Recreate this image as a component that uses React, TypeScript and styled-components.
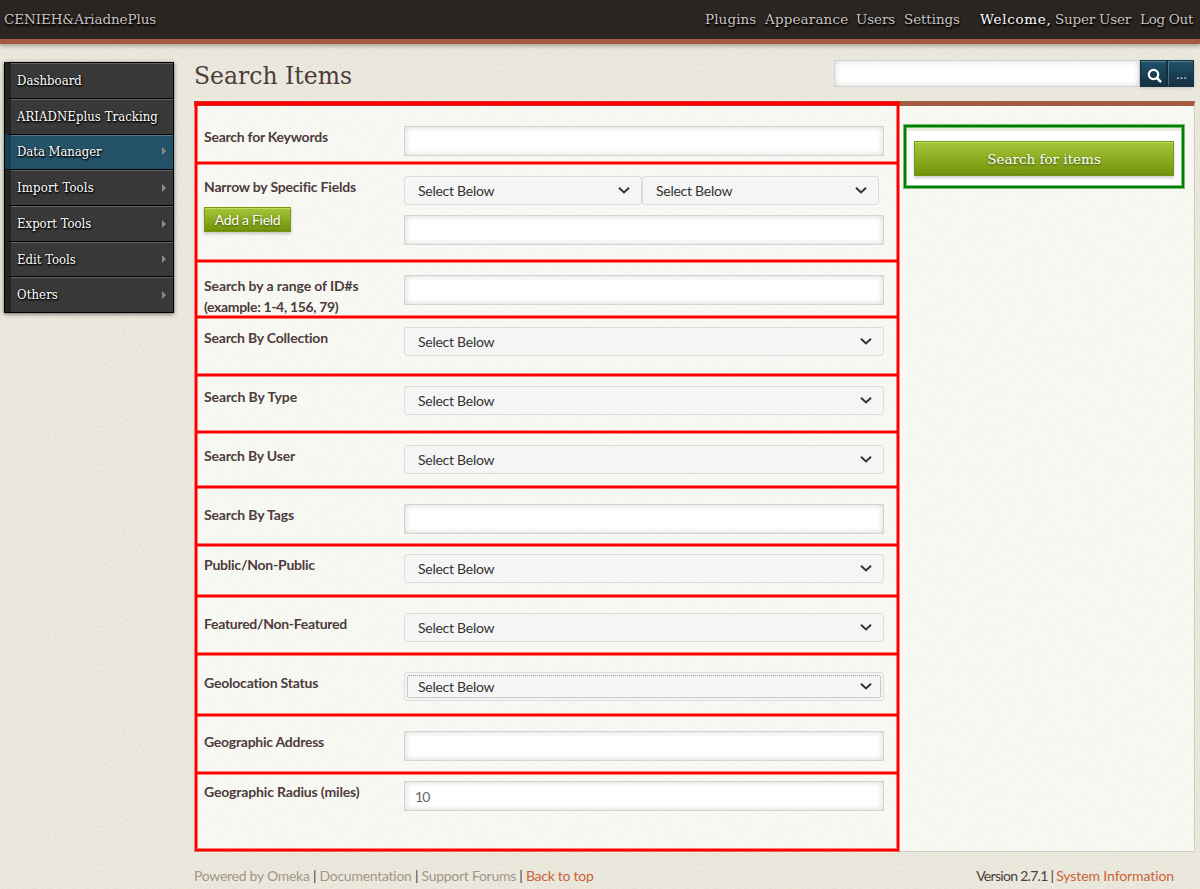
import React from "react";
import styled, { createGlobalStyle, css } from "styled-components";

const slab = `"DejaVu Serif", serif`;
const slabNarrow = `"DejaVu Serif Condensed", "DejaVu Serif", serif`;
const sans = `Lato, "Open Sans", sans-serif`;

const grain = (tone: string, alpha: number, offset: number, freq: number) =>
  `url("data:image/svg+xml,${encodeURIComponent(
    `<svg xmlns='http://www.w3.org/2000/svg' width='200' height='200'><filter id='n' x='0' y='0' width='100%' height='100%'><feTurbulence type='fractalNoise' baseFrequency='${freq}' numOctaves='3' stitchTiles='stitch'/><feColorMatrix values='0 0 0 0 ${tone} 0 0 0 0 ${tone} 0 0 0 0 ${tone} ${alpha} 0 0 0 ${offset}'/></filter><rect width='200' height='200' filter='url(#n)'/></svg>`
  )}")`;

const Global = createGlobalStyle`
  *, *::before, *::after { box-sizing: border-box; }
  html, body { margin: 0; padding: 0; }
  body {
    background: ${grain("0.4", 0.3, -0.1, 0.5)} #edebde;
    color: #4d3c3c;
    font-family: ${sans};
    font-size: 14px;
    overflow: hidden;
  }
  button, input { font: inherit; }
`;

const Page = styled.div`
  display: flex;
  flex-direction: column;
  width: 1200px;
  height: 889px;
`;

const Header = styled.header`
  display: flex;
  height: 44px;
  flex: none;
  padding: 0 6px 0 4px;
  background: #2b2522;
  border-bottom: 5px solid #a25a40;
  box-shadow: 0 2px 4px rgba(0, 0, 0, 0.3);
  font-family: ${slab};
  font-size: 13.5px;
  line-height: 38px;
  color: #c6c4c1;
  text-shadow: 0 1px 2px #000, 1px 2px 2px #000;
  white-space: nowrap;
`;

const Slot = styled.span<{ $w: number; $ls?: number }>`
  flex: none;
  width: ${(p) => p.$w}px;
  letter-spacing: ${(p) => p.$ls ?? 0}px;
  white-space: nowrap;
`;

const Nav = styled.nav`
  display: flex;
  margin-left: auto;
`;

const White = styled.span`
  color: #fff;
`;

const Body = styled.div`
  display: flex;
  flex: 1;
  padding: 18px 5px 0 4px;
`;

const Menu = styled.ul`
  flex: none;
  width: 170px;
  height: 251px;
  margin: 0 20px 0 0;
  padding: 0 0 1px;
  list-style: none;
  background: #000;
  border: 0 solid #000;
  border-width: 0 1px;
  box-shadow: 0 1px 4px rgba(0, 0, 0, 0.55);
  font-family: ${slabNarrow};
  font-size: 13px;
  color: #fff;
`;

const MenuItem = styled.li<{ $h: number; $active?: boolean }>`
  display: flex;
  align-items: center;
  justify-content: space-between;
  height: ${(p) => p.$h}px;
  padding: 0 6px ${(p) => (p.$active ? 2 : 0)}px 6px;
  border-top: 1px solid #000;
  border-left: 6px solid ${(p) => (p.$active ? "#1b3f50" : "#252525")};
  background: repeating-conic-gradient(rgba(0, 0, 0, 0.09) 0 25%, transparent 0 50%) 0 0 / 4px 4px,
    ${(p) => (p.$active ? "#25566e" : "#3b3b3b")};
  box-shadow: inset 0 1px 0 rgba(255, 255, 255, 0.22);
  text-shadow: 0 1px 2px #000, 1px 1px 2px #000;
`;

const Arrow = styled.i`
  width: 0;
  height: 0;
  margin-right: 1px;
  border: 4px solid transparent;
  border-left-color: #8a8a8a;
  border-right-width: 0;
`;

const Main = styled.main`
  display: flex;
  flex-direction: column;
  width: 1001px;
`;

const TitleBar = styled.div`
  display: flex;
  justify-content: space-between;
  height: 41px;
  margin-top: -2px;
  padding-right: 1px;
`;

const Title = styled.h1`
  margin: 0;
  font: 400 23.5px/32px ${slab};
`;

const SiteSearch = styled.div`
  display: flex;
  width: 360px;
  height: 27px;
`;

const field = css`
  border: 1px solid #d4d4d4;
  background: #fff;
  box-shadow: inset 0 0 6px rgba(0, 0, 0, 0.17);
  outline: 0;
  border-radius: 0;
`;

const SiteInput = styled.input`
  ${field}
  flex: 1;
  min-width: 0;
`;

const BlueButton = styled.button`
  display: flex;
  align-items: center;
  justify-content: center;
  width: 27px;
  padding: 3px 0 0 2px;
  border: 1px solid #153243;
  background: linear-gradient(#215269, #152f40);
  box-shadow: inset 0 1px 0 rgba(255, 255, 255, 0.25), 0 1px 3px rgba(0, 0, 0, 0.15);
  color: #c3cdd2;
  line-height: 1;
  & + & {
    padding-top: 0;
    box-shadow: inset 1px 1px 0 rgba(255, 255, 255, 0.25), 0 1px 3px rgba(0, 0, 0, 0.15);
  }
`;

const Panel = styled.section`
  display: flex;
  height: 751px;
  border: 1px solid #d0cec2;
  border-top: 5px solid #a25a40;
  border-left: 0;
  background: ${grain("0.55", 0.15, -0.05, 0.2)} #f9f9f4;
`;

const halfRed = "rgba(255, 0, 0, 0.5)";

const Form = styled.form`
  width: 704px;
  height: 749px;
  margin: -4px 0 0 1px;
  border: solid #f00;
  border-width: 3px 2px 2px;
  box-shadow: 0 0 0 1px ${halfRed}, inset 0 0 0 1px ${halfRed};
`;

const Row = styled.div<{ $h: number; $pt: number }>`
  display: flex;
  height: ${(p) => p.$h}px;
  padding: ${(p) => p.$pt}px 0 0 7px;
  & + & {
    border-top: 2px solid #f00;
    box-shadow: 0 -1px 0 ${halfRed}, inset 0 1px 0 ${halfRed};
  }
`;

const LabelCol = styled.div`
  flex: none;
  width: 200px;
`;

const Label = styled.label<{ $ls: number }>`
  display: block;
  font-size: 14px;
  font-weight: 700;
  line-height: 21px;
  letter-spacing: ${(p) => p.$ls}px;
  white-space: nowrap;
`;

const Fields = styled.div`
  display: flex;
  flex-wrap: wrap;
  align-content: flex-start;
  row-gap: 10px;
  width: 480px;
`;

const TextInput = styled.input`
  ${field}
  width: 480px;
  height: 30px;
  padding: 1px 10px 1px;
  color: #666;
  letter-spacing: -0.9px;
`;

const Select = styled.div<{ $w: number; $focus?: boolean }>`
  position: relative;
  display: flex;
  align-items: center;
  justify-content: space-between;
  width: ${(p) => p.$w}px;
  height: 29px;
  padding: 0 11px 0 13px;
  border: 1px solid #dcdcdc;
  border-radius: 3px;
  background: #f5f5f5;
  color: #333;
  line-height: 29px;
  letter-spacing: -0.26px;
  ${(p) =>
    p.$focus &&
    css`
      &::after {
        content: "";
        position: absolute;
        inset: 2px;
        border: 1px dotted #999;
        border-radius: 2px;
      }
    `}
`;

const green = css`
  border: 1px solid #749a12;
  background: linear-gradient(#a5c63a, #73920a);
  box-shadow: inset 0 1px 0 #c2dc5e, inset 0 -1px 0 #6d8715, 0 2px 3px rgba(0, 0, 0, 0.2);
  color: #fff;
  text-shadow: 0 1px 2px rgba(50, 70, 0, 0.9);
  padding: 0;
  white-space: nowrap;
`;

const AddButton = styled.button`
  ${green}
  display: block;
  width: 87px;
  height: 25px;
  margin-top: 10px;
  letter-spacing: -0.3px;
`;

const SaveBox = styled.aside`
  width: 280px;
  height: 63px;
  margin: 19px 0 0 5px;
  padding: 14px 8px;
  border: 2px solid #008000;
  box-shadow: 0 0 0 1px rgba(0, 128, 0, 0.5), inset 0 0 0 1px rgba(0, 128, 0, 0.5);
  background: linear-gradient(#eceadf 4px, #fff 4px);
`;

const SaveButton = styled.button`
  ${green}
  display: block;
  width: 260px;
  height: 35px;
  font-family: ${slab};
  font-size: 13.5px;
`;

const Footer = styled.footer`
  display: flex;
  justify-content: space-between;
  padding: 14px 21px 0 0;
  line-height: 20px;
  font-size: 14px;
  letter-spacing: -0.27px;
  white-space: nowrap;
`;

const Version = styled.span`
  letter-spacing: -0.7px;
`;

const Muted = styled.span`
  color: #a49589;
`;

const Link = styled.span<{ $ls?: number }>`
  color: #cb6238;
  letter-spacing: ${(p) => p.$ls ?? -0.27}px;
`;

const Chevron = () => (
  <svg width="12" height="8" viewBox="0 0 12 8" fill="none" stroke="#333" strokeWidth="2">
    <path d="M1 0.8 6 5.4 11 0.8" />
  </svg>
);

const SearchIcon = () => (
  <svg width="15" height="15" viewBox="0 0 15 15" fill="none" stroke="#fff">
    <circle cx="6.5" cy="6.5" r="4.7" strokeWidth="2.2" />
    <path d="m10 10 3.3 3.3" strokeWidth="2.6" strokeLinecap="round" />
  </svg>
);

type MenuEntry = { text: string; h: number; ls: number; arrow?: boolean; active?: boolean };
const menu: MenuEntry[] = [
  { text: "Dashboard", h: 36, ls: 0.05 },
  { text: "ARIADNEplus Tracking", h: 36, ls: 0.06 },
  { text: "Data Manager", h: 35, ls: -0.05, arrow: true, active: true },
  { text: "Import Tools", h: 36, ls: 0.17, arrow: true },
  { text: "Export Tools", h: 36, ls: 0, arrow: true },
  { text: "Edit Tools", h: 35, ls: 0, arrow: true },
  { text: "Others", h: 36, ls: 0.1, arrow: true },
];

const Picker = ({ w = 480, focus = false }: { w?: number; focus?: boolean }) => (
  <Select $w={w} $focus={focus}>
    <span>Select Below</span>
    <Chevron />
  </Select>
);

type RowEntry = { label: string; ls: number; h: number; pt: number; kind: "input" | "select" | "focus"; value?: string };
const rows: RowEntry[] = [
  { label: "Search By Collection", ls: -0.2, h: 58, pt: 9, kind: "select" },
  { label: "Search By Type", ls: -0.1, h: 57, pt: 10, kind: "select" },
  { label: "Search By User", ls: -0.2, h: 55, pt: 12, kind: "select" },
  { label: "Search By Tags", ls: -0.14, h: 58, pt: 16, kind: "input" },
  { label: "Public/Non-Public", ls: -0.23, h: 51, pt: 8, kind: "select" },
  { label: "Featured/Non-Featured", ls: -0.29, h: 58, pt: 16, kind: "select" },
  { label: "Geolocation Status", ls: -0.2, h: 61, pt: 17, kind: "focus" },
  { label: "Geographic Address", ls: -0.25, h: 58, pt: 15, kind: "input" },
  { label: "Geographic Radius (miles)", ls: -0.16, h: 77, pt: 7, kind: "input", value: "10" },
];

export default function App() {
  return (
    <Page>
      <Global />
      <Header>
        <Slot $w={200} $ls={-0.1}>CENIEH&amp;AriadnePlus</Slot>
        <Nav>
          <Slot $w={60} $ls={0.1}>Plugins</Slot>
          <Slot $w={91} $ls={0.15}>Appearance</Slot>
          <Slot $w={48} $ls={-0.1}>Users</Slot>
          <Slot $w={76} $ls={-0.1}>Settings</Slot>
          <Slot $w={75} $ls={0.7}><White>Welcome,</White></Slot>
          <Slot $w={85} $ls={-0.2}>Super User</Slot>
          <Slot $w={54} $ls={-0.3}>Log Out</Slot>
        </Nav>
      </Header>
      <Body>
        <Menu>
          {menu.map((m) => (
            <MenuItem key={m.text} $h={m.h} $active={m.active}>
              <Slot $w={142} $ls={m.ls}>{m.text}</Slot>
              {m.arrow && <Arrow />}
            </MenuItem>
          ))}
        </Menu>
        <Main>
          <TitleBar>
            <Title>Search Items</Title>
            <SiteSearch>
              <SiteInput />
              <BlueButton type="button"><SearchIcon /></BlueButton>
              <BlueButton type="button">…</BlueButton>
            </SiteSearch>
          </TitleBar>
          <Panel>
            <Form>
              <Row $h={57} $pt={21}>
                <LabelCol><Label $ls={-0.25}>Search for Keywords</Label></LabelCol>
                <Fields><TextInput /></Fields>
              </Row>
              <Row $h={98} $pt={12}>
                <LabelCol>
                  <Label $ls={-0.2}>Narrow by Specific Fields</Label>
                  <AddButton type="button">Add a Field</AddButton>
                </LabelCol>
                <Fields>
                  <Picker w={238} />
                  <Picker w={237} />
                  <TextInput />
                </Fields>
              </Row>
              <Row $h={56} $pt={13}>
                <LabelCol>
                  <Label $ls={-0.11}>Search by a range of ID#s</Label>
                  <Label $ls={-0.34}>(example: 1-4, 156, 79)</Label>
                </LabelCol>
                <Fields><TextInput /></Fields>
              </Row>
              {rows.map((r) => (
                <Row key={r.label} $h={r.h} $pt={r.pt}>
                  <LabelCol><Label $ls={r.ls}>{r.label}</Label></LabelCol>
                  <Fields>
                    {r.kind === "input" ? <TextInput defaultValue={r.value} /> : <Picker focus={r.kind === "focus"} />}
                  </Fields>
                </Row>
              ))}
            </Form>
            <SaveBox>
              <SaveButton type="button">Search for items</SaveButton>
            </SaveBox>
          </Panel>
          <Footer>
            <div>
              <Muted>Powered by Omeka</Muted> | <Muted>Documentation</Muted> | <Muted>Support Forums</Muted> | <Link>Back to top</Link>
            </div>
            <div><Version>Version 2.7.1 | </Version><Link $ls={-0.1}>System Information</Link></div>
          </Footer>
        </Main>
      </Body>
    </Page>
  );
}
